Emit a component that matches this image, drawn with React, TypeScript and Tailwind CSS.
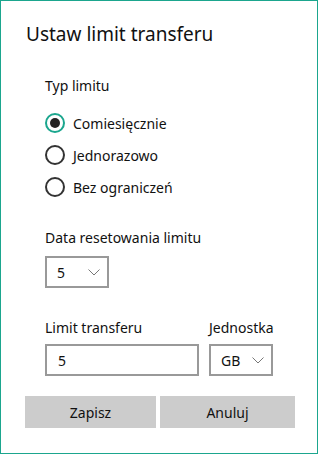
import { useState } from "react";

function Chevron() {
  return (
    <svg width="12" height="7" viewBox="0 0 12 7" className="text-[#777]">
      <path d="M0.5 0.5l5.5 5.5 5.5-5.5" fill="none" stroke="currentColor" strokeWidth="1" />
    </svg>
  );
}

function Radio({ label, checked, onClick }: { label: string; checked: boolean; onClick: () => void }) {
  return (
    <button type="button" onClick={onClick} className="flex items-center h-[32px] gap-[8px] text-left">
      <span
        className={`w-[20px] h-[20px] rounded-full border-2 flex items-center justify-center ${
          checked ? "border-[#1ba68e]" : "border-[#333]"
        }`}
      >
        {checked && <span className="w-[10px] h-[10px] rounded-full bg-[#222]" />}
      </span>
      <span className="text-[14px] text-[#111]">{label}</span>
    </button>
  );
}

function Select({ value }: { value: string }) {
  return (
    <div className="w-[64px] h-[32px] border-2 border-[#999] bg-white flex items-center justify-between pl-[10px] pr-[7px]">
      <span className="text-[14px] text-[#111]">{value}</span>
      <Chevron />
    </div>
  );
}

export default function App() {
  const [type, setType] = useState(0);
  const options = ["Comiesięcznie", "Jednorazowo", "Bez ograniczeń"];

  return (
    <div
      className="w-[318px] h-[454px] border border-[#1ba68e] bg-white flex flex-col"
      style={{ fontFamily: '"Segoe UI", "Noto Sans", sans-serif' }}
    >
      <h1 className="text-[19px] leading-[28px] text-[#111] mt-[19px] ml-[25px]">Ustaw limit transferu</h1>

      <div className="ml-[44px] mt-[28px] flex flex-col">
        <p className="text-[14px] leading-[20px] text-[#111]">Typ limitu</p>
        <div className="flex flex-col mt-[11px]">
          {options.map((o, i) => (
            <Radio key={o} label={o} checked={type === i} onClick={() => setType(i)} />
          ))}
        </div>

        <p className="text-[14px] leading-[20px] text-[#111] mt-[25px]">Data resetowania limitu</p>
        <div className="mt-[8px]">
          <Select value="5" />
        </div>

        <div className="flex gap-[10px] mt-[30px]">
          <div className="flex flex-col">
            <p className="text-[14px] leading-[20px] text-[#111]">Limit transferu</p>
            <div className="mt-[6px] w-[154px] h-[32px] border-2 border-[#999] flex items-center px-[11px]">
              <span className="text-[14px] text-[#111]">5</span>
            </div>
          </div>
          <div className="flex flex-col">
            <p className="text-[14px] leading-[20px] text-[#111]">Jednostka</p>
            <div className="mt-[6px]">
              <Select value="GB" />
            </div>
          </div>
        </div>
      </div>

      <div className="flex gap-[4px] ml-[24px] mt-[20px]">
        <button type="button" className="w-[131px] h-[32px] bg-[#ccc] text-[14px] text-[#111]">Zapisz</button>
        <button type="button" className="w-[135px] h-[32px] bg-[#ccc] text-[14px] text-[#111]">Anuluj</button>
      </div>
    </div>
  );
}
